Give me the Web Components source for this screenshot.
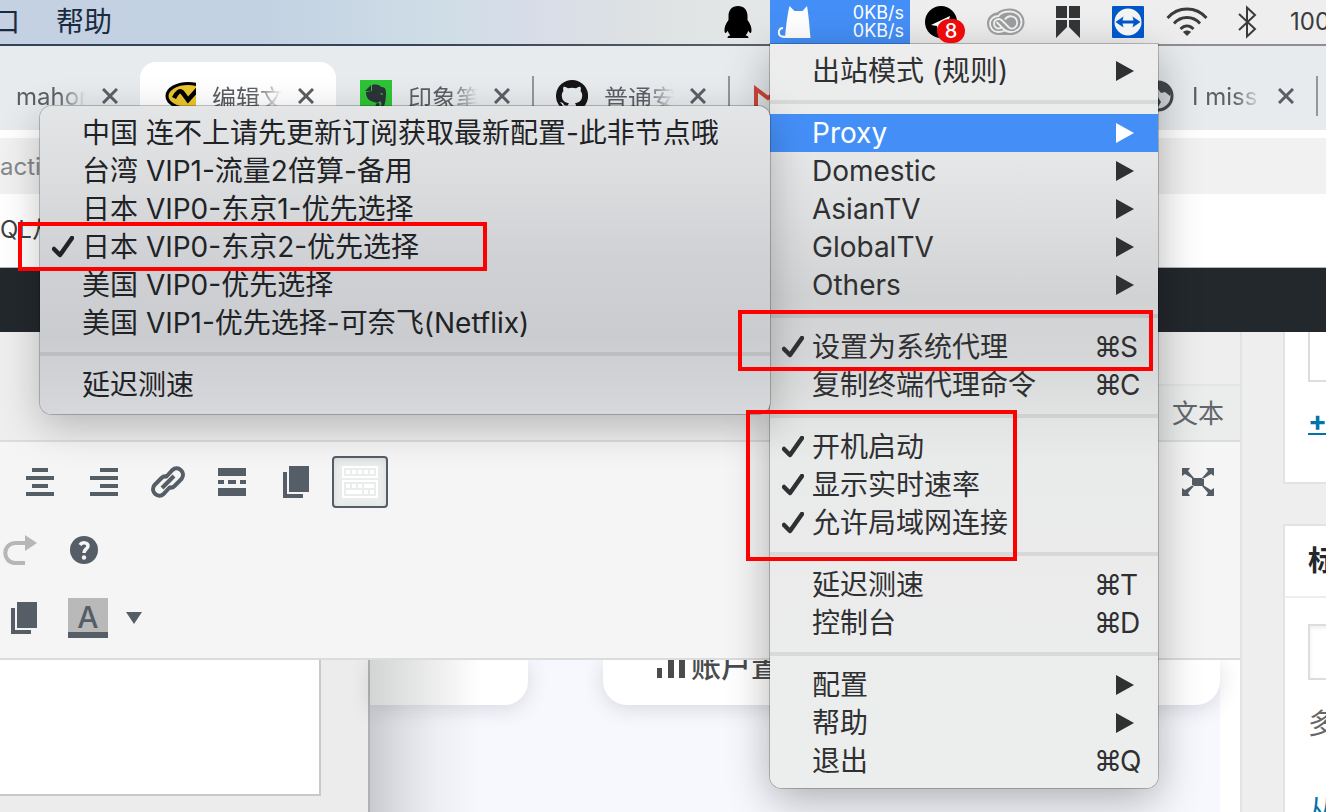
<!DOCTYPE html>
<html lang="zh-CN">
<head>
<meta charset="utf-8">
<title>编辑文章</title>
<style>
  html, body { height: 100%; }
  body {
    margin: 0;
    overflow: hidden;
    font-family: Inter, 'Noto Sans CJK SC', sans-serif;
    background: #eee;
  }
</style>
</head>
<body>
<desktop-screen>
  <mac-menubar slot="menubar">
    <status-item slot="status" icon="penguin" label="QQ" style="--w: 64px"></status-item>
    <status-item slot="status" icon="cat" label="Clash" active style="--w: 140px">
      <span>0KB/s</span><span>0KB/s</span>
      <mac-menu slot="menu">
        <menu-item arrow>出站模式 (规则)</menu-item>
        <menu-line></menu-line>
        <menu-item arrow active>Proxy
          <mac-menu slot="submenu" kind="sub">
            <menu-item>中国 连不上请先更新订阅获取最新配置-此非节点哦</menu-item>
            <menu-item>台湾 VIP1-流量2倍算-备用</menu-item>
            <menu-item>日本 VIP0-东京1-优先选择</menu-item>
            <menu-item checked>日本 VIP0-东京2-优先选择</menu-item>
            <menu-item>美国 VIP0-优先选择</menu-item>
            <menu-item>美国 VIP1-优先选择-可奈飞(Netflix)</menu-item>
            <menu-line></menu-line>
            <menu-item>延迟测速</menu-item>
            <mark-box style="left: -22px; top: 116px; width: 469px; height: 49px"></mark-box>
          </mac-menu>
        </menu-item>
        <menu-item arrow>Domestic</menu-item>
        <menu-item arrow>AsianTV</menu-item>
        <menu-item arrow>GlobalTV</menu-item>
        <menu-item arrow>Others</menu-item>
        <menu-line></menu-line>
        <menu-item checked key="S">设置为系统代理</menu-item>
        <menu-item key="C">复制终端代理命令</menu-item>
        <menu-line></menu-line>
        <menu-item checked>开机启动</menu-item>
        <menu-item checked>显示实时速率</menu-item>
        <menu-item checked>允许局域网连接</menu-item>
        <menu-line></menu-line>
        <menu-item key="T">延迟测速</menu-item>
        <menu-item key="D">控制台</menu-item>
        <menu-line></menu-line>
        <menu-item arrow>配置</menu-item>
        <menu-item arrow>帮助</menu-item>
        <menu-item key="Q">退出</menu-item>
        <mark-box style="left: -32px; top: 266px; width: 415px; height: 61px"></mark-box>
        <mark-box style="left: -24px; top: 366px; width: 271px; height: 151px"></mark-box>
      </mac-menu>
    </status-item>
    <status-item slot="status" icon="telegram" label="Telegram" badge="8" style="--w: 70px"></status-item>
    <status-item slot="status" icon="cloud" label="Creative Cloud" style="--w: 52px"></status-item>
    <status-item slot="status" icon="ribbon" label="Magnet" style="--w: 72px"></status-item>
    <status-item slot="status" icon="viewer" label="TeamViewer" style="--w: 48px"></status-item>
    <status-item slot="status" icon="wifi" label="Wi-Fi" style="--w: 70px"></status-item>
    <status-item slot="status" icon="bluetooth" label="Bluetooth" style="--w: 50px"></status-item>
  </mac-menubar>

  <browser-chrome slot="browser">
    <browser-tab first>mahon</browser-tab>
    <browser-tab icon="mark" active>编辑文</browser-tab>
    <browser-tab icon="evernote">印象笔</browser-tab>
    <browser-tab icon="github" line>普通安</browser-tab>
    <browser-tab icon="gmail" line></browser-tab>
    <browser-tab></browser-tab>
    <browser-tab icon="globe">I miss</browser-tab>
    <browser-tab line first></browser-tab>
  </browser-chrome>

  <post-editor slot="page"></post-editor>
  <side-boxes slot="page"></side-boxes>
</desktop-screen>

<script>
// every icon is [width, height, markup], drawn in its own pixel box
const icons = {
  penguin: [28, 34, '<path d="M14 1C8 1 4.500 5 4.500 11v4C2 18 .5 22 .5 25c0 2 .3 3 1 3 .8 0 1.500-1 2.300-2.200.5 1.800 1.300 3.200 2.600 4.400C4.500 30.600 3.500 31.400 3.500 33h21c0-1.600-1-2.400-2.900-2.800 1.300-1.200 2.100-2.600 2.600-4.400C25 27 25.700 28 26.500 28c.7 0 1-1 1-3 0-3-1.500-7-4-10v-4C23.500 5 20 1 14 1z"/>'],
  cat: [34, 34, '<path d="M11.500 1l5 5h8l4.500-5c1.500 8 2.500 20 3.500 32H7c1-12 2.500-24 4.500-32z" fill="#fff"/><path d="M5 23c-4 0-5 4-3.500 7 1 2 4 2 8 2" fill="none" stroke="#fff" stroke-width="2"/>'],
  telegram: [40, 34, '<circle cx="16" cy="17" r="16"/><path d="M6 20l19-9-4 16-5-4-3 2-1-4z" fill="#fff"/>'],
  cloud: [40, 28, '<path d="M12 27C6 27 1 22 1 15.500S6 5 11 4.500C14 2 19 .5 24 .5c8 0 14.500 6 14.500 13.500S32 27 24 27z" fill="#999b9c"/><path d="M19 22.500c-2 1-4 1.500-7 1.500-5 0-8-4-8-8.500S8 8 12.500 8C15 4 19 3.500 24 3.500c7 0 11.500 5 11.500 10.500S31 24 24.500 24c-3 0-5-1-7-3l-7-7" fill="none" stroke="#eee" stroke-width="1.800"/><path d="M16 19c-3 3-8 1-8-3.500 0-4 5-6 8-3l7 7c4 3 9-1 8-6-1-6-9-7-12-2" fill="none" stroke="#eee" stroke-width="1.800"/>'],
  ribbon: [24, 32, '<path d="M0 0h11v12H0zM13 0h11v12H13zM0 14h11v7L0 32zM13 14h11v18L13 21z" fill="#333436"/>'],
  viewer: [32, 32, '<rect width="32" height="32" rx="1" fill="#0056c8"/><circle cx="16" cy="16" r="13.500" fill="#f2f3f3"/><path d="M3.500 16l8-5.500-1 4h11l-1-4 8 5.500-8 5.500 1-4h-11l1 4z" fill="#0056c8"/>'],
  wifi: [42, 30, '<g fill="none" stroke="#3a3b3d" stroke-width="2.800"><path d="M1.500 11C12-1 30-1 40.500 11"/><path d="M8 16.500c7-8 19-8 26 0"/><path d="M14.500 22c4-4 9-4 13 0"/></g><path d="M17 25c2-2 6-2 8 0l-4 4z" fill="#3a3b3d"/>'],
  bluetooth: [22, 34, '<path d="M3 9l16 15-8 7.500v-29L19 10 3 25" fill="none" stroke="#3a3b3d" stroke-width="2"/>'],
  mark: [32, 32, '<svg width="32" height="32"><ellipse cx="24" cy="16" rx="21" ry="12.500" fill="#ecc52d" stroke="#000" stroke-width="3"/><path d="M10 18c3-6 6-8 8-6l6 8 10-11" fill="none" stroke="#000" stroke-width="4.500"/></svg>'],
  evernote: [32, 32, '<rect width="32" height="32" fill="#2fc437"/><path d="M12 5c5-1 8 0 9 2 4 0 5 2 5 6 0 6-1 12-3 15-2 2-6 2-7-1-1-2 0-4 2-4s2 2 1 3c3 1 3-4 1-5-1 2-4 2-6 1-5-1-8-4-8-10l6-1z" fill="#2b3438"/><path d="M11 5v6H5z" fill="#2b3438"/><path d="M20 14c1-2 3-1 3 1z" fill="#2fc437"/>'],
  github: [32, 32, '<path fill="#171515" d="M16 0a16 16 0 0 0-5 31.200c.8.1 1-.4 1-.8v-3c-4.400 1-5.400-1.900-5.400-1.900-.7-1.800-1.800-2.300-1.800-2.300-1.400-1 .2-1 .2-1 1.600.1 2.400 1.600 2.400 1.600 1.400 2.500 3.700 1.800 4.700 1.400 0-1 .5-1.700 1-2.100-3.600-.4-7.300-1.800-7.300-7.900 0-1.700.6-3.200 1.600-4.300 0-.4-.7-2 .2-4.200 0 0 1.300-.5 4.400 1.600a15 15 0 0 1 8 0c3-2.100 4.400-1.600 4.400-1.600.9 2.200.3 3.800.2 4.200 1 1.100 1.600 2.600 1.600 4.300 0 6.200-3.700 7.500-7.300 7.900.6.500 1.100 1.500 1.100 3v4.300c0 .4.300.9 1.100.8A16 16 0 0 0 16 0z"/>'],
  gmail: [32, 32, '<path d="M4 7h26v22H4z" fill="#e8eaec"/><path d="M4 30V9l12 9L28 9v21" fill="none" stroke="#d1483b" stroke-width="4"/>'],
  globe: [32, 32, '<circle cx="14" cy="16" r="14" fill="#d7dade" stroke="#45494d" stroke-width="3"/><path d="M8 3h14l6 7-2 6-5-4-4 1-3-4zM5 12l9 5 3 5-4 7-5-3z" fill="#45494d"/>'],
  close: [16, 16, '<path d="M1 1l14 14M15 1L1 15" stroke="#5b5f63" stroke-width="3"/>'],
  center: [28, 28, '<path d="M6 0h16v4H6zM0 8h28v4H0zM6 16h16v4H6zM0 24h28v4H0z"/>'],
  right: [28, 28, '<path d="M10 0h18v4H10zM0 8h28v4H0zM10 16h18v4H10zM0 24h28v4H0z"/>'],
  link: [34, 34, '<g fill="none" stroke="#555d66" stroke-width="4"><path d="M15 12l6.500-7c5-5 14 2 9 9l-7 7c-2 2-4 2-6 1"/><path d="M19 22l-6.500 7c-5 5-14-2-9-9l7-7c2-2 4-2 6-1"/><path d="M11 23l12-12"/></g>'],
  more: [28, 28, '<path d="M0 0h28v8H0zM0 12h6v4H0zM10 12h8v4h-8zM22 12h6v4h-6zM0 20h28v8H0z"/>'],
  copy: [26, 32, '<path d="M6 0h20v26H6zM0 6h4v22h16v4H0z"/>'],
  keyboard: [36, 32, '<g fill="none" stroke="#fff" stroke-width="2"><path d="M1 1h34v10H1zM1 15h34v16H1z"/></g><path d="M4 4h4v4H4zM10 4h4v4h-4zM16 4h4v4h-4zM22 4h4v4h-4zM28 4h4v4h-4zM4 18h4v4H4zM10 18h4v4h-4zM16 18h4v4h-4zM22 18h10v4H22zM4 24h16v4H4zM22 24h4v4h-4zM28 24h4v4h-4z" fill="#fff"/>'],
  redo: [34, 30, '<path d="M22 8H12c-13 1-13 19 0 20h10" fill="none" stroke="#b4b6b8" stroke-width="4"/><path d="M22 0l12 8-12 8z" fill="#b4b6b8"/>'],
  help: [28, 28, '<circle cx="14" cy="14" r="14"/><path d="M10 9c2-3 8-3 8 1 0 3-4 3-4 7" fill="none" stroke="#f5f5f5" stroke-width="3.500"/><circle cx="14" cy="21.500" r="2.200" fill="#f5f5f5"/>'],
  caret: [16, 12, '<path d="M0 0h16L8 12z"/>'],
  full: [32, 28, '<path d="M10 10h12v8H10zM0 0h8L6 3l6 7-1 1-8-5-3 2zM32 0h-8l2 3-6 7 1 1 8-5 3 2zM0 28h8l-2-3 6-7-1-1-8 5-3-2zM32 28h-8l2-3-6-7 1-1 8 5 3-2z"/>'],
  check: [22, 22, '<path d="M2 13l6 6L20 2" fill="none" stroke="currentColor" stroke-width="4.500" stroke-linecap="round" stroke-linejoin="round"/>'],
  arrow: [18, 20, '<path d="M0 0l18 10L0 20z" fill="currentColor"/>'],
  bars: [28, 28, '<path d="M0 18h5v10H0zM11 10h6v18h-6zM22 2h6v26h-6z" fill="#4a4b4d"/>'],
};

const icon = (name) => {
  if (!icons[name]) return '';
  const [w, h, body] = icons[name];
  return `<svg width="${w}" height="${h}" viewBox="0 0 ${w} ${h}" aria-hidden="true">${body}</svg>`;
};

class BaseElement extends HTMLElement {
  constructor() {
    super();
    this.attachShadow({ mode: 'open' });
  }

  connectedCallback() {
    const template = document.createElement('template');
    template.innerHTML = `
      <style>
        *, *:before, *:after { box-sizing: border-box; }
        button { font: inherit; color: inherit; background: none; border: 0; padding: 0; margin: 0; }
        svg { display: block; flex: none; }
        ${this.getStyles()}
      </style>
      ${this.getTemplate()}
    `;
    this.shadowRoot.replaceChildren(template.content.cloneNode(true));
  }
}

class DesktopScreen extends BaseElement {
  getTemplate() {
    return `
      <slot name="menubar"></slot>
      <slot name="browser"></slot>
      <main><slot name="page"></slot></main>
    `;
  }

  getStyles() {
    return `
      :host { display: flex; flex-direction: column; height: 100%; }
      main { flex: 1; min-height: 0; display: flex; }
    `;
  }
}

class MacMenubar extends BaseElement {
  getTemplate() {
    return `
      <nav>
        <button class="cut">口</button>
        <button>帮助</button>
      </nav>
      <div class="status"><slot name="status"></slot><span class="battery">100</span></div>
    `;
  }

  getStyles() {
    return `
      :host {
        position: relative;
        z-index: 5;
        display: flex;
        justify-content: space-between;
        height: 46px;
        flex: none;
        background:
          linear-gradient(90deg, #33435a 0 30%, #5a6068 58%, #8d8f92 70%) 0 100% / 100% 2px no-repeat,
          linear-gradient(90deg, #c3d1e2, #c3d2e2 20%, #cfdde7 33%, #d8dde8 41%, #dfe3e3 50%, #e6e8e8 60%, #eee 70%);
      }
      nav { display: flex; gap: 36px; height: 44px; font-size: 28px; color: #1b2b3f; }
      .cut { width: 20px; display: flex; justify-content: flex-end; overflow: hidden; white-space: nowrap; }
      button { line-height: 44px; }
      .status { display: flex; height: 44px; }
      .battery {
        width: 54px;
        padding-left: 18px;
        overflow: hidden;
        font-size: 24px;
        line-height: 44px;
        color: #3a3b3d;
      }
    `;
  }
}

class StatusItem extends BaseElement {
  getTemplate() {
    const badge = this.getAttribute('badge');
    return `
      <button aria-label="${this.getAttribute('label')}">
        <span class="icon">${icon(this.getAttribute('icon'))}${badge ? `<b>${badge}</b>` : ''}</span>
        <span class="speed"><slot></slot></span>
      </button>
      <slot name="menu"></slot>
    `;
  }

  getStyles() {
    return `
      :host { position: relative; display: block; width: var(--w); height: 44px; }
      button { width: 100%; height: 100%; display: flex; align-items: center; justify-content: center; }
      .icon { position: relative; }
      .speed { display: none; }
      b {
        position: absolute;
        right: 0;
        bottom: -4px;
        width: 28px;
        height: 24px;
        border-radius: 12px;
        background: #ee0a0a;
        color: #fff;
        font-size: 20px;
        font-weight: 500;
        line-height: 24px;
      }
      :host([active]) button { background: #448ff7; color: #fff; padding: 0 6px 0 8px; justify-content: space-between; }
      :host([active]) .speed { display: flex; flex-direction: column; font-size: 18px; line-height: 18px; }
    `;
  }
}

class MacMenu extends BaseElement {
  getTemplate() {
    return '<div class="list"><slot></slot></div>';
  }

  getStyles() {
    return `
      :host {
        position: absolute;
        top: 100%;
        left: 0;
        width: 388px;
        padding: 8px 0;
        box-sizing: border-box;
        border-radius: 0 0 12px 12px;
        color: #2f3032;
        background: linear-gradient(#ededed, #eaebeb 10%, #dfe0e1 22%, #d0d2d3 34%, #d5d6d7 42%, #e0e1e1 49%, #e9eaea 56%, #ebebeb 70%, #eceeee);
        box-shadow: 0 0 0 1px rgba(0, 0, 0, .22), 0 12px 44px rgba(0, 0, 0, .3);
      }
      :host([kind=sub]) {
        top: -8px;
        left: auto;
        right: 100%;
        width: 730px;
        padding-bottom: 10px;
        border-radius: 12px;
        color: #1f2326;
        background: linear-gradient(#e3e5e7, #dadcde 25%, #cfd1d4 50%, #caccd0 75%, #d6d8dc);
        box-shadow: 0 0 0 1px rgba(0, 0, 0, .22), 0 12px 40px rgba(0, 0, 0, .24);
      }
      .list { display: flex; flex-direction: column; }
    `;
  }
}

class MenuItem extends BaseElement {
  getTemplate() {
    const key = this.getAttribute('key');
    return `
      <button>
        <span class="check">${this.hasAttribute('checked') ? icon('check') : ''}</span>
        <span class="label"><slot></slot></span>
        ${this.hasAttribute('arrow') ? `<span class="arrow">${icon('arrow')}</span>` : ''}
        ${key ? `<span class="key"><span>⌘</span><span>${key}</span></span>` : ''}
      </button>
      <slot name="submenu"></slot>
    `;
  }

  getStyles() {
    return `
      :host { position: relative; display: block; font-size: 28px; }
      button { display: flex; align-items: center; width: 100%; height: 38px; padding-left: 12px; line-height: 38px; white-space: nowrap; text-align: left; }
      :host([active]) button { background: #448ff7; color: #fff; }
      .check { width: 30px; }
      .label { flex: 1; }
      .arrow { width: 42px; }
      .key { width: 64px; display: grid; grid-template-columns: 26px 1fr; }
    `;
  }
}

class MenuLine extends BaseElement {
  getTemplate() {
    return '<hr>';
  }

  getStyles() {
    return `
      :host { display: block; padding: 10px 0; }
      hr { height: 4px; margin: 0; border: 0; background: rgba(0, 0, 0, .08); }
    `;
  }
}

class MarkBox extends BaseElement {
  getTemplate() {
    return '';
  }

  getStyles() {
    return ':host { position: absolute; z-index: 3; box-sizing: border-box; border: 4px solid #f00; pointer-events: none; }';
  }
}

class BrowserChrome extends BaseElement {
  getTemplate() {
    return `
      <div class="tabs"><slot></slot></div>
      <div class="address"><input aria-label="地址" value="acti"></div>
      <div class="bookmarks"><a href="#">QL从</a></div>
      <div class="admin"></div>
    `;
  }

  getStyles() {
    return `
      :host { display: block; flex: none; background: #fff; }
      .tabs { display: flex; height: 84px; padding-top: 16px; overflow: hidden; background: #e7ebee; }
      .address { padding: 8px 0; }
      input { display: block; width: 100%; height: 56px; padding: 0; border: 0; background: #f1f1f1; font: 24px Inter, sans-serif; color: #85888c; }
      .bookmarks { height: 66px; border-bottom: 1px solid #b5b7b9; line-height: 56px; }
      a { font-size: 24px; color: #3c4043; text-decoration: none; }
      .admin { height: 64px; background: #23282d; }
    `;
  }
}

class BrowserTab extends BaseElement {
  getTemplate() {
    const text = this.textContent.trim();
    return `
      <span class="icon">${icon(this.getAttribute('icon'))}</span>
      <span class="title"><slot></slot></span>
      ${text ? `<button aria-label="关闭">${icon('close')}</button>` : ''}
    `;
  }

  getStyles() {
    return `
      :host {
        position: relative;
        display: flex;
        align-items: center;
        flex: none;
        width: 196px;
        height: 68px;
        padding-left: 24px;
        box-sizing: border-box;
        font-size: 24px;
        color: #5b5f63;
      }
      :host([first]) { width: 140px; padding-left: 16px; }
      :host([first]) .icon { display: none; }
      :host([active]) { background: #fff; border-radius: 16px 16px 0 0; }
      :host([line])::before { content: ''; position: absolute; left: 0; top: 14px; width: 2px; height: 40px; background: #93979a; }
      .icon { width: 48px; }
      .title { width: 70px; margin-right: 16px; overflow: hidden; white-space: nowrap; -webkit-mask-image: linear-gradient(90deg, #000 60%, transparent); mask-image: linear-gradient(90deg, #000 60%, transparent); }
    `;
  }
}

class PostEditor extends BaseElement {
  getTool(name, extra = '') {
    return `<button class="tool ${extra}" aria-label="${name}">${icon(name)}</button>`;
  }

  getTemplate() {
    return `
      <div class="head"><button class="mode">文本</button></div>
      <div class="bar">
        <div class="row one">
          ${['center', 'right', 'link', 'more', 'copy'].map((name) => this.getTool(name)).join('')}
          ${this.getTool('keyboard', 'on')}
          ${this.getTool('full', 'end')}
        </div>
        <div class="row two">${this.getTool('redo')}${this.getTool('help')}</div>
        <div class="row three">
          ${this.getTool('copy')}
          <button class="tool"><span class="color">A</span></button>
          ${this.getTool('caret', 'small')}
        </div>
      </div>
      <div class="body">
        <div class="paper"></div>
        <div class="shot">
          <div class="card left"></div>
          <div class="card wide">${icon('bars')}<span>账户置</span></div>
        </div>
      </div>
    `;
  }

  getStyles() {
    return `
      :host { flex: 1; min-width: 0; display: flex; flex-direction: column; border-right: 2px solid #e2e3e4; background: #eee; }
      .head { height: 108px; display: flex; justify-content: flex-end; align-items: flex-end; }
      .mode { width: 96px; height: 56px; padding: 0 16px 4px 0; border-top: 2px solid #e3e4e4; background: #ebecec; font-size: 26px; text-align: right; color: #63666a; }
      .bar { border: solid #dcdcdd; border-width: 2px 0; padding: 6px 0; background: #f5f5f5; fill: #555d66; overflow: hidden; }
      .row { display: flex; height: 68px; align-items: center; }
      .one { padding-left: 8px; }
      .two { margin-left: -12px; }
      .three { margin-left: -8px; }
      .tool { width: 64px; height: 52px; display: flex; align-items: center; justify-content: center; flex: none; }
      .small { width: 28px; }
      .on { width: 56px; margin-left: 4px; border: 2px solid #555d66; border-radius: 4px; background: #ebeded; box-shadow: inset 0 2px 6px #d5dada; }
      .end { margin-left: auto; margin-right: 10px; }
      .color { width: 40px; height: 40px; border-bottom: 6px solid #555d66; background: #b9b9b9; font-size: 30px; font-weight: 500; line-height: 38px; color: #555d66; }
      .body { flex: 1; min-height: 0; display: flex; overflow: hidden; background: #ececec; }
      .paper { width: 321px; height: 136px; border: solid #c9c9c9; border-width: 0 2px 2px 0; background: #fff; }
      .shot {
        flex: 1;
        display: flex;
        gap: 75px;
        margin-left: 47px;
        border-left: 2px solid #b0b1b4;
        border-right: 20px solid #fff;
        background: linear-gradient(90deg, #c9cacf, #dfe0e5 4%, #eeeff4 8%, #f7f8fd 13%);
      }
      .card { height: 45px; background: #fff; box-shadow: 0 4px 20px rgba(60, 60, 80, .16); }
      .left { width: 158px; border-radius: 0 0 24px 0; background: linear-gradient(90deg, #d3d4d4, #fff 70%); }
      .wide { flex: 1; display: flex; gap: 6px; padding-left: 54px; border-radius: 0 0 24px 24px; overflow: hidden; font-size: 30px; font-weight: 500; color: #4a4b4d; }
      .wide svg { margin-top: -10px; }
      .wide span { line-height: 12px; }
    `;
  }
}

class SideBoxes extends BaseElement {
  getTemplate() {
    return `
      <section class="first">
        <div class="list"></div>
        <a class="plus" href="#">+</a>
      </section>
      <section class="tags">
        <h2><label for="tag">标</label></h2>
        <div class="inside">
          <input id="tag">
          <p>多</p>
          <a href="#">从</a>
        </div>
      </section>
    `;
  }

  getStyles() {
    return `
      :host { flex: none; width: 84px; padding-left: 41px; box-sizing: border-box; overflow: hidden; background: #eee; }
      section { border: solid #e2e3e4; border-width: 0 0 2px 2px; background: #fff; overflow: hidden; }
      .first { height: 152px; padding-left: 23px; margin-bottom: 40px; }
      .list { height: 50px; border: solid #ddd; border-width: 0 0 2px 2px; }
      .plus { display: inline-block; margin-top: 22px; font-size: 28px; font-weight: 700; line-height: 34px; }
      a { color: #0073aa; font-size: 28px; }
      .tags { border-top-width: 2px; }
      h2 { margin: 0; padding-left: 23px; border-bottom: 2px solid #eee; font-size: 28px; line-height: 70px; color: #23282d; }
      .inside { padding: 26px 0 0 23px; white-space: nowrap; }
      input { display: block; width: 80px; height: 56px; border: 2px solid #ddd; box-shadow: inset 0 2px 4px #eee; }
      p { margin: 24px 0 44px; font-size: 28px; line-height: 40px; color: #666; }
    `;
  }
}

customElements.define('desktop-screen', DesktopScreen);
customElements.define('mac-menubar', MacMenubar);
customElements.define('status-item', StatusItem);
customElements.define('mac-menu', MacMenu);
customElements.define('menu-item', MenuItem);
customElements.define('menu-line', MenuLine);
customElements.define('mark-box', MarkBox);
customElements.define('browser-chrome', BrowserChrome);
customElements.define('browser-tab', BrowserTab);
customElements.define('post-editor', PostEditor);
customElements.define('side-boxes', SideBoxes);
</script>
</body>
</html>
